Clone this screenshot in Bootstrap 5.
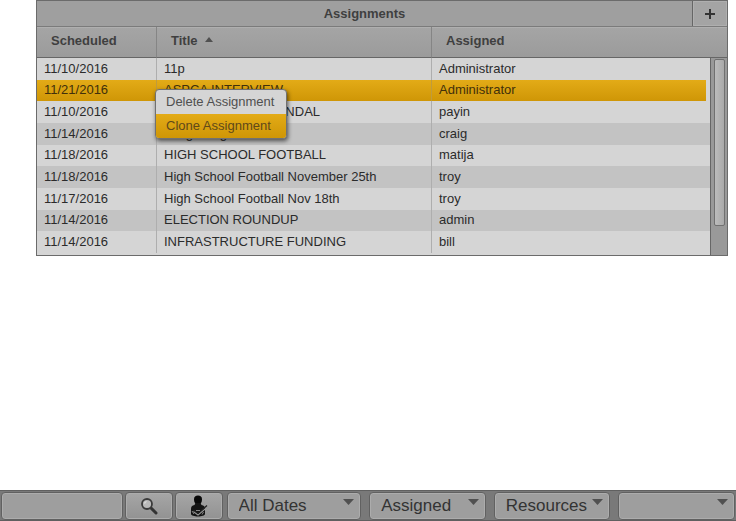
<!DOCTYPE html>
<html lang="en">
<head>
<meta charset="utf-8">
<meta name="viewport" content="width=device-width, initial-scale=1">
<title>Assignments</title>
<link href="https://cdn.jsdelivr.net/npm/bootstrap@5.3.0/dist/css/bootstrap.min.css" rel="stylesheet">
<style>
body { font: 13px/16px "Liberation Sans", Arial, sans-serif; color: #2b2b2b; background: #fff; }
.panel-wrap { padding: 0 8px 0 36px; }
.panel { border: 1px solid #6b6b6b; background: #9f9f9f; }
.panel-title { font-size: 13px; line-height: 16px; color: #3f3f3f; }
.panel-head { height: 26px; border-bottom: 1px solid #7b7b7b; }
.add-btn { width: 35px; height: 25px; border: 0; border-left: 1px solid #666; border-radius: 0; background: #a4a4a4; box-shadow: inset 0 0 0 1px #afafaf; color: #333; }
.grid-wrap { background: #d5d5d5; padding-bottom: 2px; }
.grid { width: 100%; height: 226px; table-layout: fixed; border-collapse: separate; border-spacing: 0; }
.grid th { height: 31px; padding: 0 14px 2px; color: #3f3f3f; background: linear-gradient(#a5a5a5, #9b9b9b); border-bottom: 1px solid #666; border-right: 1px solid #858585; box-shadow: inset 0 1px #afafaf; }
.grid th:last-child { border-right: 0; }
.grid td { padding: 0 7px; background: #d5d5d5; border-right: 1px solid #aeaeae; white-space: nowrap; }
.grid td:last-child { border-right: 0; }
.grid tbody tr:nth-child(even) td { background: #c3c3c3; }
.grid tbody tr.picked td { background: linear-gradient(#e3ab17, #cf9606); border-right-color: #bf9b3c; color: #41300b; }
.grid tbody tr.picked td:last-child { background: linear-gradient(#e3ab17, #cf9606) 0 0 / calc(100% - 21px) 100% no-repeat #d5d5d5; }
.col-date { width: 120px; }
.col-title { width: 275px; }
.track { top: 31px; right: 0; bottom: 0; width: 17px; background: #999; border-left: 1px solid #666; padding: 1px 2px 0 3px; }
.thumb { height: 85%; border: 1px solid #707070; border-radius: 2px; background: linear-gradient(90deg, #bcbcbc, #a9a9a9); }
.popup { top: 9px; left: -2px; width: 132px; min-width: 0; padding: 0; border: 1px solid #717171; border-radius: 4px; background: #d5d5d5; box-shadow: 1px 2px 4px #0009; overflow: hidden; font-size: 13px; z-index: 2; }
.popup .dropdown-item { padding: 4px 10px; line-height: 16px; color: #505050; }
.popup .dropdown-item.active { background: linear-gradient(#e3ab17, #cf9606); color: #60491a; }
.tools { height: 31px; padding: 1px 1px 0; gap: 2px; background: #797979; border: solid #606060; border-width: 1px 0; }
.tools .tool { height: 100%; min-width: 0; padding-top: 0; padding-bottom: 0; border: 1px solid #616161; border-radius: 4px; background-color: #9e9e9e; box-shadow: inset 0 0 0 1px #acacac; color: #333; }
.search-box { flex: 1 1 121px; }
.tools .tool-btn { flex: 0 0 48px; background: linear-gradient(#a6a6a6, #929292); }
.tool-select { flex: 1 1 116px; margin-left: 6px; font-size: 17px; line-height: 20px; padding: 0 20px 0 11px; appearance: none; background: url("data:image/svg+xml,%3Csvg xmlns='http://www.w3.org/2000/svg' viewBox='0 0 11 6'%3E%3Cpath d='M0 0h11L5.500 6z' fill='%23505050'/%3E%3C/svg%3E") right 6px top 6px / 11px 6px no-repeat; }
.select-dates { flex-basis: 134px; margin-left: 2px; }
</style>
<script src="https://cdn.jsdelivr.net/npm/bootstrap@5.3.0/dist/js/bootstrap.bundle.min.js"></script>
</head>
<body>
<div class="d-flex flex-column justify-content-between min-vh-100">
  <main class="panel-wrap">
    <section class="panel">
      <header class="panel-head d-flex align-items-center">
        <h1 class="panel-title flex-grow-1 text-center fw-bold m-0">Assignments</h1>
        <button type="button" class="add-btn p-0 d-flex align-items-center justify-content-center" aria-label="Add assignment">
          <svg width="10" height="10" viewBox="0 0 10 10" aria-hidden="true"><path d="M4 0h2v4h4v2H6v4H4V6H0V4h4z" fill="currentColor"/></svg>
        </button>
      </header>
      <div class="grid-wrap position-relative">
        <table class="grid">
          <colgroup><col class="col-date"><col class="col-title"><col></colgroup>
          <thead><tr>
            <th scope="col">Scheduled</th>
            <th scope="col">Title <svg class="ms-1 mb-1" width="8" height="5" viewBox="0 0 8 5" aria-hidden="true"><path d="M0 5L4 0l4 5z" fill="#505050"/></svg></th>
            <th scope="col">Assigned</th>
          </tr></thead>
          <tbody>
            <tr><td>11/10/2016</td><td>11p</td><td>Administrator</td></tr>
            <tr class="picked"><td>11/21/2016</td><td class="position-relative">ASPCA INTERVIEW
              <div class="popup dropdown-menu show">
                <button type="button" class="dropdown-item">Delete Assignment</button>
                <button type="button" class="dropdown-item active">Clone Assignment</button>
              </div></td><td>Administrator</td></tr>
            <tr><td>11/10/2016</td><td>CITY COUNCIL SCANDAL</td><td>payin</td></tr>
            <tr><td>11/14/2016</td><td>Long Song</td><td>craig</td></tr>
            <tr><td>11/18/2016</td><td>HIGH SCHOOL FOOTBALL</td><td>matija</td></tr>
            <tr><td>11/18/2016</td><td>High School Football November 25th</td><td>troy</td></tr>
            <tr><td>11/17/2016</td><td>High School Football Nov 18th</td><td>troy</td></tr>
            <tr><td>11/14/2016</td><td>ELECTION ROUNDUP</td><td>admin</td></tr>
            <tr><td>11/14/2016</td><td>INFRASTRUCTURE FUNDING</td><td>bill</td></tr>
          </tbody>
        </table>
        <div class="track position-absolute" aria-hidden="true"><div class="thumb"></div></div>
      </div>
    </section>
  </main>
  <form class="tools d-flex">
    <input type="text" class="tool search-box px-2" aria-label="Search">
    <button type="button" class="tool tool-btn d-flex align-items-center justify-content-center" aria-label="Search assignments">
      <svg width="18" height="18" viewBox="0 0 18 18" fill="none" aria-hidden="true"><path d="M10.500 10.500l5.500 5.500" stroke="#333" stroke-width="3" stroke-linecap="round"/><circle cx="7" cy="7" r="5" fill="#b9b9b9" stroke="#3a3a3a" stroke-width="1.800"/><path d="M4.500 6.500a3 3 0 0 1 2-2" stroke="#e0e0e0" stroke-width="1.300"/></svg>
    </button>
    <button type="button" class="tool tool-btn d-flex align-items-center justify-content-center" aria-label="My assignments">
      <svg width="18" height="22" viewBox="0 0 18 22" aria-hidden="true"><path d="M4 4.500C4 1.500 5.500.5 8 .5s4 1 4 4-1.500 5-4 5-4-2-4-5z" fill="#080808"/><path d="M5.500 8h5l1 2c2.500.5 3.500 1.500 3.500 4v5c0 1.500-3.500 2.500-7 2.500S1 20.500 1 19v-5c0-2.500 1-3.500 3.500-4z" fill="#141414"/><path d="M3.500 16.500L8 20l9.500-8" fill="none" stroke="#999" stroke-width="1.200"/><path d="M3.500 15L8 18.500l9-8" fill="none" stroke="#222" stroke-width="1.300"/><path d="M2 16l2 3M13.500 17l-1.500 2.500M6 15.500h4" stroke="#888" fill="none"/></svg>
    </button>
    <select class="tool tool-select select-dates" aria-label="Dates"><option>All Dates</option></select>
    <select class="tool tool-select" aria-label="Assigned"><option>Assigned</option></select>
    <select class="tool tool-select" aria-label="Resources"><option>Resources</option></select>
    <select class="tool tool-select" aria-label="Filter"><option></option></select>
  </form>
</div>
</body>
</html>
